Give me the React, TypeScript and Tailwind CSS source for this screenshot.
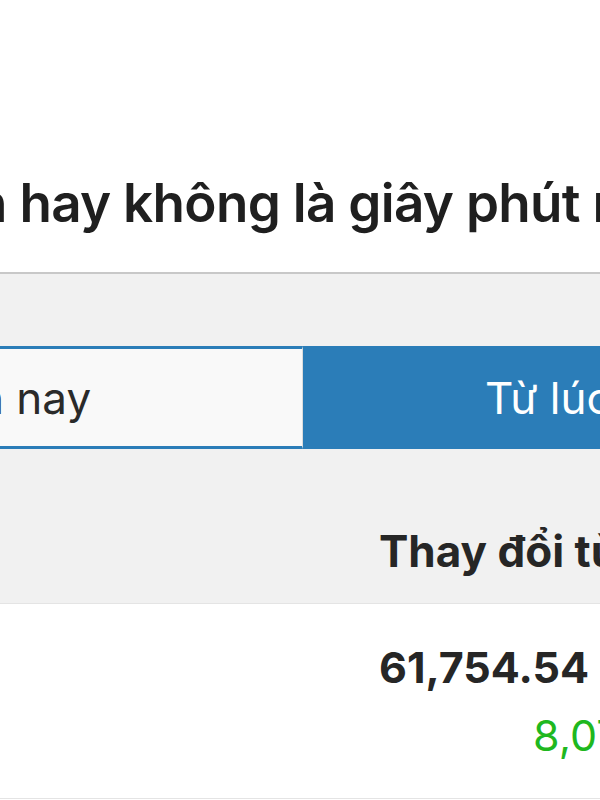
import React from 'react';

export default function App() {
  return (
    <div className="w-[600px] h-[800px] overflow-hidden bg-white text-[#222] font-['Inter','Roboto',sans-serif]">
      {/* Title */}
      <div className="h-[272px] pt-[171px] overflow-hidden whitespace-nowrap">
        <h1 className="ml-[-25px] text-[53px] leading-[64px] font-semibold tracking-[-0.7px] text-[#1f1f1f]">
          n hay không là giây phút này
        </h1>
      </div>

      {/* Controls panel */}
      <div className="border-t-2 border-[#c8c8c8] bg-[#f1f1f1] h-[331px] flex flex-col">
        <div className="mt-[72px] flex h-[103px] whitespace-nowrap">
          <div className="w-[303px] bg-[#f9f9f9] border-y-[3px] border-[#2b7db8] border-r border-r-[#dcdcdc] flex items-center overflow-hidden">
            <span className="ml-[-22px] text-[44px] text-[#2a2a2a]">n nay</span>
          </div>
          <div className="flex-1 bg-[#2b7db8] flex items-center overflow-hidden">
            <span className="ml-[182px] text-[44px] text-white">Từ lúc bắt đầu</span>
          </div>
        </div>
        <div className="flex-1 flex items-end pb-[26px] pl-[379px] whitespace-nowrap overflow-hidden">
          <span className="text-[44px] leading-[52px] font-bold text-[#262626]">Thay đổi từ</span>
        </div>
      </div>

      {/* Data row */}
      <div className="border-t border-[#e4e4e4] h-[196px] border-b pl-[379px] whitespace-nowrap overflow-hidden">
        <div className="pt-[37px] text-[43px] font-bold leading-[52px] text-[#262626]">61,754.54 $</div>
        <div className="pt-[16px] pl-[154px] text-[43px] leading-[52px] text-[#1fb81f]">8,071.23</div>
      </div>
    </div>
  );
}
